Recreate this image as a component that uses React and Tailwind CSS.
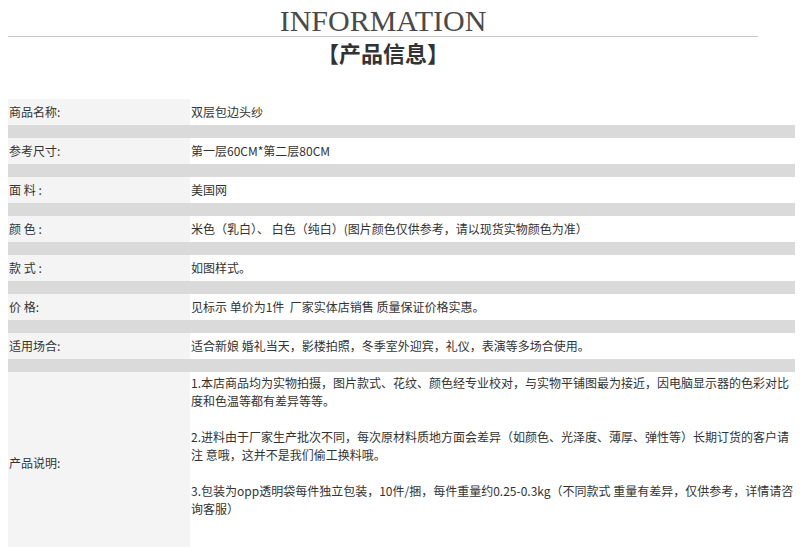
const rows = [
  { label: '商品名称:', value: '双层包边头纱' },
  { label: '参考尺寸:', value: '第一层60CM*第二层80CM' },
  { label: '面 料 :', value: '美国网' },
  { label: '颜 色 :', value: '米色（乳白）、 白色（纯白）(图片颜色仅供参考，请以现货实物颜色为准）' },
  { label: '款 式 :', value: '如图样式。' },
  { label: '价 格:', value: '见标示 单价为1件  厂家实体店销售 质量保证价格实惠。' },
  { label: '适用场合:', value: '适合新娘 婚礼当天，影楼拍照，冬季室外迎宾，礼仪，表演等多场合使用。' },
]

const notes = [
  ['1.本店商品均为实物拍摄，图片款式、花纹、颜色经专业校对，与实物平铺图最为接近，因电脑显示器的色彩对比', '度和色温等都有差异等等。'],
  ['2.进料由于厂家生产批次不同，每次原材料质地方面会差异（如颜色、光泽度、薄厚、弹性等）长期订货的客户请', '注 意哦，这并不是我们偷工换料哦。'],
  ['3.包装为opp透明袋每件独立包装，10件/捆，每件重量约0.25-0.3kg（不同款式 重量有差异，仅供参考，详情请咨', '询客服）'],
]

const App = () => {
  return (
    <div className="w-[800px] h-[547px] overflow-hidden bg-white text-[#333] font-['Noto_Sans_CJK_SC',sans-serif]">
      {/* Header */}
      <div className="ml-[8px] w-[750px] pt-[6px]">
        <div className="text-center font-['Liberation_Serif',serif] text-[30px] leading-[30px] text-[#4a4a4a]">INFORMATION</div>
        <div className="h-px bg-[#c8c8c8]" />
        <div className="text-center text-[22px] leading-[26px] font-bold text-[#333] mt-[2px]">【产品信息】</div>
      </div>

      {/* Table */}
      <div className="ml-[8px] w-[787px] mt-[34px] text-[12px]">
        {rows.map((r) => (
          <div key={r.label}>
            <div className="flex h-[26px] items-center">
              <div className="w-[182px] h-full bg-[#f4f4f4] flex items-center pl-[1px]">{r.label}</div>
              <div className="flex-1 pl-[1px] whitespace-pre">{r.value}</div>
            </div>
            <div className="h-[13px] bg-[#dadada]" />
          </div>
        ))}
        <div className="flex h-[182px]">
          <div className="w-[182px] bg-[#f4f4f4] flex items-center pl-[1px]">产品说明:</div>
          <div className="flex-1 pl-[1px] pt-[2px] leading-[18px] whitespace-nowrap">
            {notes.map((n, i) => (
              <p key={i} className="mb-[18px]">
                {n[0]}
                <br />
                {n[1]}
              </p>
            ))}
          </div>
        </div>
      </div>
    </div>
  )
}

export default App
